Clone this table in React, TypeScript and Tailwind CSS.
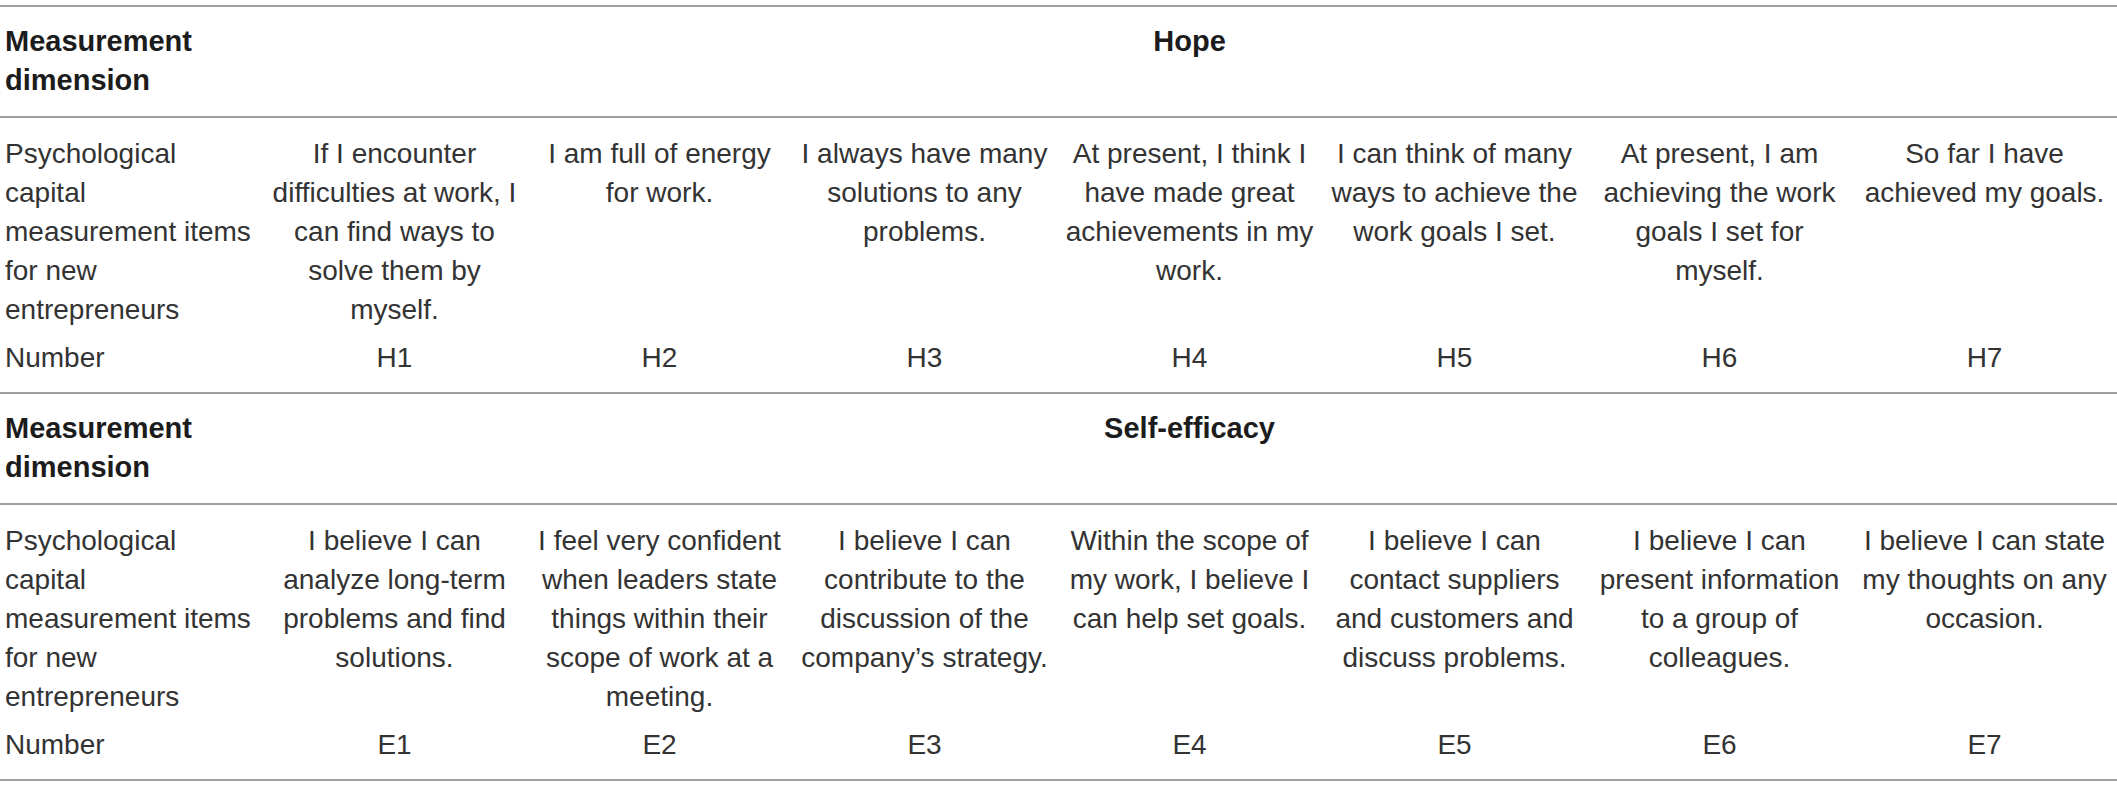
import React from 'react';

interface Section {
  title: string;
  items: string[][];
  codes: string[];
}

const SECTIONS: Section[] = [
  {
    title: 'Hope',
    items: [
      ['If I encounter', 'difficulties at work, I', 'can find ways to', 'solve them by', 'myself.'],
      ['I am full of energy', 'for work.'],
      ['I always have many', 'solutions to any', 'problems.'],
      ['At present, I think I', 'have made great', 'achievements in my', 'work.'],
      ['I can think of many', 'ways to achieve the', 'work goals I set.'],
      ['At present, I am', 'achieving the work', 'goals I set for', 'myself.'],
      ['So far I have', 'achieved my goals.'],
    ],
    codes: ['H1', 'H2', 'H3', 'H4', 'H5', 'H6', 'H7'],
  },
  {
    title: 'Self-efficacy',
    items: [
      ['I believe I can', 'analyze long-term', 'problems and find', 'solutions.'],
      ['I feel very confident', 'when leaders state', 'things within their', 'scope of work at a', 'meeting.'],
      ['I believe I can', 'contribute to the', 'discussion of the', 'company\u2019s strategy.'],
      ['Within the scope of', 'my work, I believe I', 'can help set goals.'],
      ['I believe I can', 'contact suppliers', 'and customers and', 'discuss problems.'],
      ['I believe I can', 'present information', 'to a group of', 'colleagues.'],
      ['I believe I can state', 'my thoughts on any', 'occasion.'],
    ],
    codes: ['E1', 'E2', 'E3', 'E4', 'E5', 'E6', 'E7'],
  },
];

const LABEL = ['Psychological', 'capital', 'measurement items', 'for new', 'entrepreneurs'];

const Lines = ({ lines }: { lines: string[] }) => (
  <>
    {lines.map((l, i) => (
      <React.Fragment key={i}>
        {i > 0 && <br />}
        {l}
      </React.Fragment>
    ))}
  </>
);

const App = () => {
  return (
    <div className="bg-white min-h-screen pt-[5px] text-[#333333] font-['Liberation_Sans',Arial,sans-serif] text-[28px] leading-[39px]">
      <table className="w-[2117px] table-fixed border-separate border-spacing-0">
        <colgroup>
          <col className="w-[262px]" />
          {Array.from({ length: 7 }).map((_, i) => (
            <col key={i} className="w-[265px]" />
          ))}
        </colgroup>
        <tbody>
          {SECTIONS.map((s, si) => (
            <React.Fragment key={s.title}>
              <tr>
                <td className="border-t-2 border-[#a0a0a0] pl-[5px] pt-[15px] pb-[16px] align-top font-bold text-[29px] text-[#1c1c1c] whitespace-nowrap">
                  Measurement
                  <br />
                  dimension
                </td>
                <td colSpan={7} className="border-t-2 border-[#a0a0a0] pt-[15px] pb-[16px] align-top text-center font-bold text-[29px] text-[#1c1c1c]">
                  {s.title}
                </td>
              </tr>
              <tr>
                <td className="border-t-2 border-[#a0a0a0] pl-[5px] pt-[16px] pb-[4px] align-top whitespace-nowrap">
                  <Lines lines={LABEL} />
                </td>
                {s.items.map((it, i) => (
                  <td key={i} className="border-t-2 border-[#a0a0a0] pt-[16px] pb-[4px] align-top text-center whitespace-nowrap">
                    <Lines lines={it} />
                  </td>
                ))}
              </tr>
              <tr>
                <td className={`pl-[5px] pt-[5px] pb-[15px] align-top ${si === SECTIONS.length - 1 ? 'border-b-2 border-[#a0a0a0]' : ''}`}>
                  Number
                </td>
                {s.codes.map((c) => (
                  <td key={c} className={`pt-[5px] pb-[15px] align-top text-center ${si === SECTIONS.length - 1 ? 'border-b-2 border-[#a0a0a0]' : ''}`}>
                    {c}
                  </td>
                ))}
              </tr>
            </React.Fragment>
          ))}
        </tbody>
      </table>
    </div>
  );
};

export default App;
